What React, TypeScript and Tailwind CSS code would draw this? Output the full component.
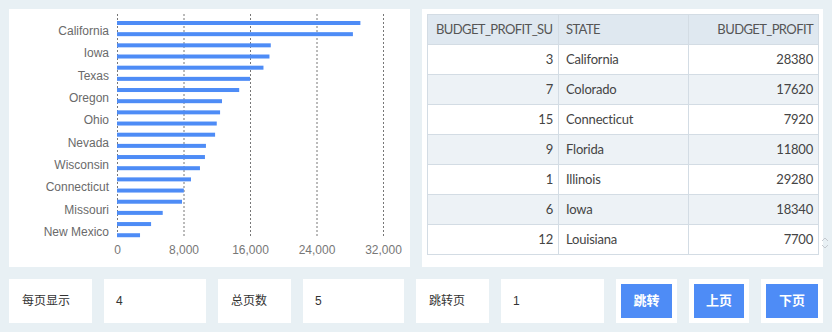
import React from "react";

const categories = [
  "California",
  "Iowa",
  "Texas",
  "Oregon",
  "Ohio",
  "Nevada",
  "Wisconsin",
  "Connecticut",
  "Missouri",
  "New Mexico",
];

// two bars per category
const barValues = [
  29280, 28380, 18500, 18340, 17620, 16000, 14700, 12630, 12400, 12000,
  11800, 10700, 10580, 9980, 8900, 8040, 7820, 5500, 4100, 2770,
];

const rows = [
  { id: 3, state: "California", profit: 28380 },
  { id: 7, state: "Colorado", profit: 17620 },
  { id: 15, state: "Connecticut", profit: 7920 },
  { id: 9, state: "Florida", profit: 11800 },
  { id: 1, state: "Illinois", profit: 29280 },
  { id: 6, state: "Iowa", profit: 18340 },
  { id: 12, state: "Louisiana", profit: 7700 },
];

const AXIS_X = 108;
const PLOT_W = 266;
const MAX = 32000;

function BarChart() {
  const ticks = [0, 8000, 16000, 24000, 32000];
  return (
    <svg width="401" height="258" className="block">
      {ticks.map((t) => {
        const x = AXIS_X + (t / MAX) * PLOT_W + 0.5;
        return (
          <g key={t}>
            <line x1={x} x2={x} y1={5} y2={229} stroke="#777" strokeWidth="1" strokeDasharray="2 2" />
            <text
              x={x}
              y={245}
              textAnchor="middle"
              fontSize="12"
              fill="#777"
              fontFamily="'Liberation Sans', Arial, sans-serif"
            >
              {t.toLocaleString("en-US")}
            </text>
          </g>
        );
      })}
      {barValues.map((v, i) => (
        <rect
          key={i}
          x={AXIS_X}
          y={12 + i * 11.17}
          width={(v / MAX) * PLOT_W}
          height={4}
          fill="#4e8cf6"
        />
      ))}
      {categories.map((c, i) => (
        <text
          key={c}
          x={100}
          y={26 + i * 22.33}
          textAnchor="end"
          fontSize="12"
          fill="#6a6a6a"
          fontFamily="'Liberation Sans', Arial, sans-serif"
        >
          {c}
        </text>
      ))}
    </svg>
  );
}

function DataTable() {
  return (
    <div className="relative h-full bg-white pt-[5px] pl-[5px] pr-[4px]">
      <table className="w-[392px] border-collapse table-fixed text-[13px] font-['Lato','Noto_Sans',sans-serif]">
        <thead>
          <tr className="h-[30px] bg-[#dfe8f0] text-[#555] tracking-[-0.6px]">
            <th className="w-[131px] border border-[#d3dce4] pl-[8px] text-left font-normal">BUDGET_PROFIT_SU</th>
            <th className="w-[130px] border border-[#d3dce4] pl-[7px] text-left font-normal">STATE</th>
            <th className="border border-[#d3dce4] pr-[5px] text-right font-normal">BUDGET_PROFIT</th>
          </tr>
        </thead>
        <tbody>
          {rows.map((r, i) => (
            <tr
              key={r.id}
              className={`h-[30px] text-[#444] tracking-[-0.2px] ${i % 2 === 1 ? "bg-[#edf2f6]" : "bg-white"}`}
            >
              <td className="border border-[#d3dce4] pr-[5px] text-right">{r.id}</td>
              <td className="border border-[#d3dce4] pl-[7px]">{r.state}</td>
              <td className="border border-[#d3dce4] pr-[5px] text-right">{r.profit}</td>
            </tr>
          ))}
        </tbody>
      </table>
      <svg width="8" height="12" className="absolute right-[-6px] top-[228px]" viewBox="0 0 8 12">
        <path d="M1 4 L4 1 L7 4" fill="none" stroke="#c4c9cf" strokeWidth="1" />
        <path d="M1 8 L4 11 L7 8" fill="none" stroke="#c4c9cf" strokeWidth="1" />
      </svg>
    </div>
  );
}

function Label({ text, w }: { text: string; w: string }) {
  return (
    <div className={`${w} h-full bg-white flex items-center pl-[13px] text-[12px] text-[#333]`}>{text}</div>
  );
}

function Field({ value, w }: { value: string; w: string }) {
  return (
    <div className={`${w} h-full bg-white flex items-center pl-[12px] text-[12px] text-[#333]`}>{value}</div>
  );
}

function Btn({ text, w }: { text: string; w: string }) {
  return (
    <div className={`${w} h-full bg-white p-[5px]`}>
      <button className="w-full h-full bg-[#4e8cf6] text-white text-[13px] font-bold">{text}</button>
    </div>
  );
}

export default function App() {
  return (
    <div className="w-[832px] h-[332px] bg-[#e8f0f4] p-[9px] font-['Liberation_Sans','Noto_Sans_CJK_SC',sans-serif]">
      <div className="flex gap-[12px] h-[258px]">
        <div className="w-[401px] h-full bg-white">
          <BarChart />
        </div>
        <div className="w-[401px] h-full">
          <DataTable />
        </div>
      </div>
      <div className="flex gap-[12px] h-[44px] mt-[12px]">
        <Label text="每页显示" w="w-[83px]" />
        <Field value="4" w="w-[102px]" />
        <Label text="总页数" w="w-[73px]" />
        <Field value="5" w="w-[101px]" />
        <Label text="跳转页" w="w-[73px]" />
        <Field value="1" w="w-[103px]" />
        <Btn text="跳转" w="w-[61px]" />
        <Btn text="上页" w="w-[60px]" />
        <Btn text="下页" w="w-[62px]" />
      </div>
    </div>
  );
}
